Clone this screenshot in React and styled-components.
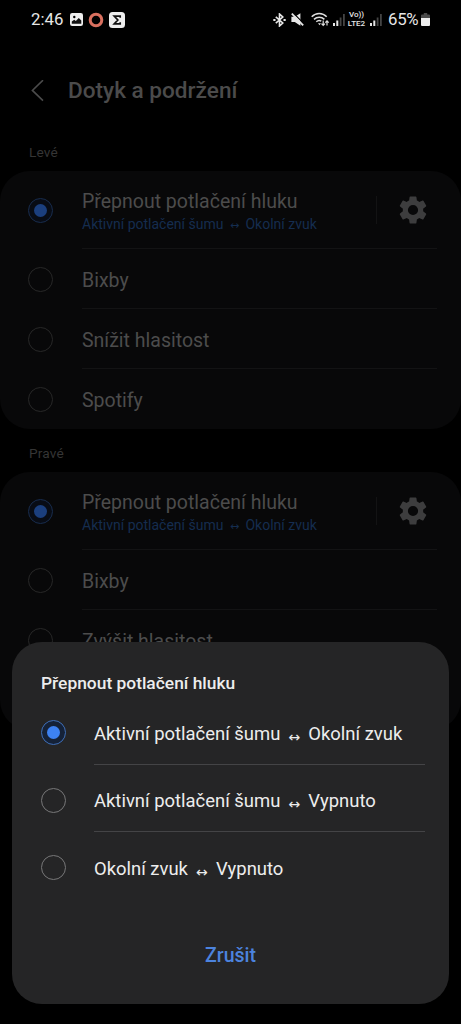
import React from 'react'
import styled, { createGlobalStyle } from 'styled-components'

const GlobalStyle = createGlobalStyle`
  * {
    box-sizing: border-box;
  }
  body {
    margin: 0;
    background: #000;
    font-family: Roboto, 'Noto Sans', sans-serif;
    overflow: hidden;
  }
`

const Screen = styled.div`
  position: relative;
  width: 461px;
  height: 1024px;
  overflow: hidden;
  background: #000;
`

const StatusBar = styled.div`
  display: flex;
  align-items: center;
  justify-content: space-between;
  height: 39px;
  padding: 0 31px 0 31px;
  color: #e6e6e6;
  font-size: 16.8px;
  line-height: 20px;
`

const StatusGroup = styled.div`
  display: flex;
  align-items: center;
  svg {
    display: block;
    flex: none;
  }
`

const Slot = styled.span`
  flex: none;
  margin-left: ${(props) => props.gap || 0}px;
`

const Clock = styled.span`
  width: 39px;
  margin-top: -1px;
`

const Battery = styled.span`
  width: 32px;
  margin: -1px 1px 0 6px;
  font-size: 16.8px;
  letter-spacing: -0.3px;
`

const NetworkLabel = styled.span`
  display: flex;
  flex-direction: column;
  align-items: center;
  width: 19px;
  margin: 0 4px 0 2px;
  font-size: 8px;
  line-height: 8px;
  font-weight: 500;
  span + span {
    padding-top: 1px;
  }
`

const Header = styled.div`
  display: flex;
  align-items: center;
  height: 103px;
  padding-left: 31px;
  svg {
    display: block;
  }
`

const Title = styled.h1`
  margin: 0 0 0 24px;
  color: #4b4b4b;
  font-size: 22.6px;
  line-height: 26px;
  font-weight: 500;
`

const SectionLabel = styled.div`
  height: ${(props) => props.height}px;
  padding: ${(props) => props.top}px 0 0 29px;
  color: #353535;
  font-size: 13.7px;
  line-height: 16px;
  letter-spacing: 0.15px;
`

const Card = styled.div`
  height: 258px;
  border-radius: 30px;
  background: #080809;
`

const Row = styled.div`
  display: flex;
  align-items: center;
  height: ${(props) => (props.tall ? 78 : 60)}px;
  padding-left: 28px;
`

const RowBody = styled.div`
  display: flex;
  align-items: center;
  width: 355px;
  height: 100%;
  margin-left: 29px;
  border-bottom: 1px solid ${(props) => (props.last ? 'transparent' : '#131314')};
`

const RowText = styled.div`
  width: 294px;
  padding-top: 4px;
  color: #4c4c4c;
  font-size: 19.5px;
  line-height: 24px;
`

const SubText = styled.div`
  color: #152d4f;
  font-size: 14px;
  line-height: 20px;
  white-space: nowrap;
`

const Separator = styled.div`
  width: 1px;
  height: 28px;
  margin-right: 19px;
  background: #131314;
`

const Radio = styled.span`
  display: flex;
  flex: none;
  align-items: center;
  justify-content: center;
  width: 25px;
  height: 25px;
  border: 1.5px solid ${(props) => props.ring};
  border-radius: 50%;
  background: ${(props) => props.fill || 'transparent'};
  &::after {
    content: '';
    width: 13px;
    height: 13px;
    border-radius: 50%;
    background: ${(props) => props.dot || 'transparent'};
  }
`

const Dialog = styled.div`
  position: absolute;
  top: 642px;
  left: 12px;
  width: 437px;
  height: 362px;
  padding: 29px 24px 0 29px;
  border-radius: 30px;
  background: #252526;
`

const DialogTitle = styled.h2`
  margin: 0 0 2px;
  color: #ededed;
  font-size: 17.4px;
  line-height: 24px;
  font-weight: 500;
`

const Option = styled.div`
  display: flex;
  align-items: center;
  height: 67.5px;
  & > span {
    margin-top: 4px;
  }
`

const OptionText = styled.div`
  display: flex;
  align-items: center;
  flex: 1;
  height: 100%;
  margin-left: 28px;
  padding-top: 7px;
  border-bottom: 1px solid ${(props) => (props.last ? 'transparent' : '#444446')};
  color: #ededed;
  font-size: 18.45px;
`

const Arrow = styled.span`
  display: inline-block;
  width: ${(props) => props.width}px;
  padding-top: ${(props) => props.drop || 0}px;
  font-family: 'Noto Sans', 'DejaVu Sans', sans-serif;
  font-size: ${(props) => props.size}px;
  line-height: 1;
  text-align: center;
`

const Cancel = styled.button`
  display: block;
  margin: 44px auto 0;
  padding: 0 5px 0 0;
  border: 0;
  background: none;
  color: #4c83de;
  font: 500 19.5px/24px Roboto, sans-serif;
`

const ImageIcon = () => (
  <svg width="13" height="13" viewBox="0 0 13 13">
    <rect width="13" height="13" rx="2.2" fill="#eee" />
    <circle cx="4.3" cy="4" r="1.2" fill="#000" />
    <path d="M1.8 10.8V8.6l2.4-1.8 1.6 1.3 3-3.2 2.5 2.6v3.3z" fill="#111" />
  </svg>
)

const RingIcon = () => (
  <svg width="16" height="16" viewBox="0 0 16 16">
    <circle cx="8" cy="8" r="5.8" fill="none" stroke="#d9705f" strokeWidth="3" />
  </svg>
)

const SigmaIcon = () => (
  <svg width="16" height="16" viewBox="0 0 16 16">
    <rect width="16" height="16" rx="3.5" fill="#eee" />
    <path d="M11.2 5.8V4.2H5.2L8.8 8l-3.6 3.8h6v-1.6" fill="none" stroke="#111" strokeWidth="1.7" />
  </svg>
)

const BluetoothIcon = () => (
  <svg width="13" height="14" viewBox="0 0 13 14" fill="none" stroke="#e6e6e6" strokeWidth="1.6">
    <path d="M2.8 3.8l7 6.2-3.3 3V1l3.3 3-7 6.2" />
    <path d="M.3 7h2.2M10.5 7h2.2" strokeWidth="2" />
  </svg>
)

const MuteIcon = () => (
  <svg width="13" height="13" viewBox="0 0 13 13">
    <path d="M.4 3.8h3.4L9.4.2v12.6L3.8 9H.4z" fill="#e6e6e6" />
    <path d="M2.3 0l10.5 10.6" stroke="#000" strokeWidth="1.2" />
    <path d="M.8.7l11.4 11.6" stroke="#e6e6e6" strokeWidth="1.8" />
  </svg>
)

const WifiIcon = () => (
  <svg width="19" height="15" viewBox="0 0 19 15" fill="none" stroke="#dedede" strokeWidth="1.5">
    <path d="M.7 4.8C4.9.3 11.5.3 15.7 4.8" />
    <path d="M3 7.4c3-3 7.4-3 10.4 0" />
    <path d="M5.3 9.8c1.6-1.6 3.4-1.7 5-.6" />
    <path d="M7 11.2h3l-1.5 2z" fill="#dedede" stroke="none" />
    <path d="M12.2 8.4v4.8M10.5 11.6l1.7 1.8 1.7-1.8M16 13.6V8.8M14.3 10.6L16 8.8l1.7 1.8" strokeWidth="1.2" />
  </svg>
)

const SignalIcon = () => (
  <svg width="12" height="12" viewBox="0 0 12 12">
    <path d="M0 9h2v3H0zM3.3 6.5h2V12h-2z" fill="#e6e6e6" />
    <path d="M6.7 3.5h1.8V12H6.7zM10 0h1.8v12H10z" fill="#444" />
  </svg>
)

const BatteryIcon = () => (
  <svg width="9" height="13" viewBox="0 0 9 13">
    <path d="M2.8 0h3.4v1.4H8a1 1 0 0 1 1 1V5H0V2.4a1 1 0 0 1 1-1h1.8z" fill="#4a4a4a" />
    <path d="M0 5h9v7a1 1 0 0 1-1 1H1a1 1 0 0 1-1-1z" fill="#eee" />
  </svg>
)

const BackIcon = () => (
  <svg width="13" height="22" viewBox="0 0 13 22">
    <path d="M12 .2L1.4 10.4 12 20.6" fill="none" stroke="#4b4b4b" strokeWidth="1.6" />
  </svg>
)

const GearIcon = () => (
  <svg width="34" height="34" viewBox="0 0 24 24">
    <path
      fill="#3d3d3e"
      d="M19.14 12.94c.04-.3.06-.61.06-.94 0-.32-.02-.64-.07-.94l2.03-1.58a.49.49 0 0 0 .12-.61l-1.92-3.32a.49.49 0 0 0-.59-.22l-2.39.96a7 7 0 0 0-1.62-.94l-.36-2.54a.48.48 0 0 0-.48-.41h-3.84a.47.47 0 0 0-.47.41l-.36 2.54c-.59.24-1.13.57-1.62.94l-2.39-.96a.47.47 0 0 0-.59.22L2.74 8.87a.47.47 0 0 0 .12.61l2.03 1.58c-.05.3-.09.63-.09.94s.02.64.07.94l-2.03 1.58a.49.49 0 0 0-.12.61l1.92 3.32c.12.22.37.29.59.22l2.39-.96c.5.38 1.03.7 1.62.94l.36 2.54c.05.24.24.41.48.41h3.84c.24 0 .44-.17.47-.41l.36-2.54a7 7 0 0 0 1.62-.94l2.39.96c.22.08.47 0 .59-.22l1.92-3.32a.47.47 0 0 0-.12-.61zM12 15.6a3.6 3.6 0 1 1 0-7.2 3.6 3.6 0 0 1 0 7.2z"
    />
  </svg>
)

const ActionCard = ({ actions }) => (
  <Card>
    <Row tall>
      <Radio ring="#182c4d" fill="#080c15" dot="#1b3f7e" />
      <RowBody>
        <RowText>
          Přepnout potlačení hluku
          <SubText>
            Aktivní potlačení šumu<Arrow size={11} width={22}>↔</Arrow>Okolní zvuk
          </SubText>
        </RowText>
        <Separator />
        <GearIcon />
      </RowBody>
    </Row>
    {actions.map((action, i) => (
      <Row key={action}>
        <Radio ring="#272727" />
        <RowBody last={i === 2}>
          <RowText>{action}</RowText>
        </RowBody>
      </Row>
    ))}
  </Card>
)

const options = [
  ['Aktivní potlačení šumu', 'Okolní zvuk'],
  ['Aktivní potlačení šumu', 'Vypnuto'],
  ['Okolní zvuk', 'Vypnuto'],
]

const App = () => (
  <>
    <GlobalStyle />
    <Screen>
      <StatusBar>
        <StatusGroup>
          <Clock>2:46</Clock>
          <Slot><ImageIcon /></Slot>
          <Slot gap={5}><RingIcon /></Slot>
          <Slot gap={5}><SigmaIcon /></Slot>
        </StatusGroup>
        <StatusGroup>
          <Slot><BluetoothIcon /></Slot>
          <Slot gap={5}><MuteIcon /></Slot>
          <Slot gap={7}><WifiIcon /></Slot>
          <Slot gap={3}><SignalIcon /></Slot>
          <NetworkLabel>
            <span>Vo))</span>
            <span>LTE2</span>
          </NetworkLabel>
          <Slot><SignalIcon /></Slot>
          <Battery>65%</Battery>
          <BatteryIcon />
        </StatusGroup>
      </StatusBar>
      <Header>
        <BackIcon />
        <Title>Dotyk a podržení</Title>
      </Header>
      <SectionLabel height={29} top={2}>Levé</SectionLabel>
      <ActionCard actions={['Bixby', 'Snížit hlasitost', 'Spotify']} />
      <SectionLabel height={43} top={16}>Pravé</SectionLabel>
      <ActionCard actions={['Bixby', 'Zvýšit hlasitost']} />
      <Dialog>
        <DialogTitle>Přepnout potlačení hluku</DialogTitle>
        {options.map(([from, to], i) => (
          <Option key={from + to}>
            <Radio
              ring={i === 0 ? '#3f6fb8' : '#777778'}
              fill={i === 0 ? '#152238' : undefined}
              dot={i === 0 ? '#3d82f2' : undefined}
            />
            <OptionText last={i === options.length - 1}>
              {from}<Arrow size={14} width={28} drop={6}>↔</Arrow>{to}
            </OptionText>
          </Option>
        ))}
        <Cancel>Zrušit</Cancel>
      </Dialog>
    </Screen>
  </>
)

export default App
